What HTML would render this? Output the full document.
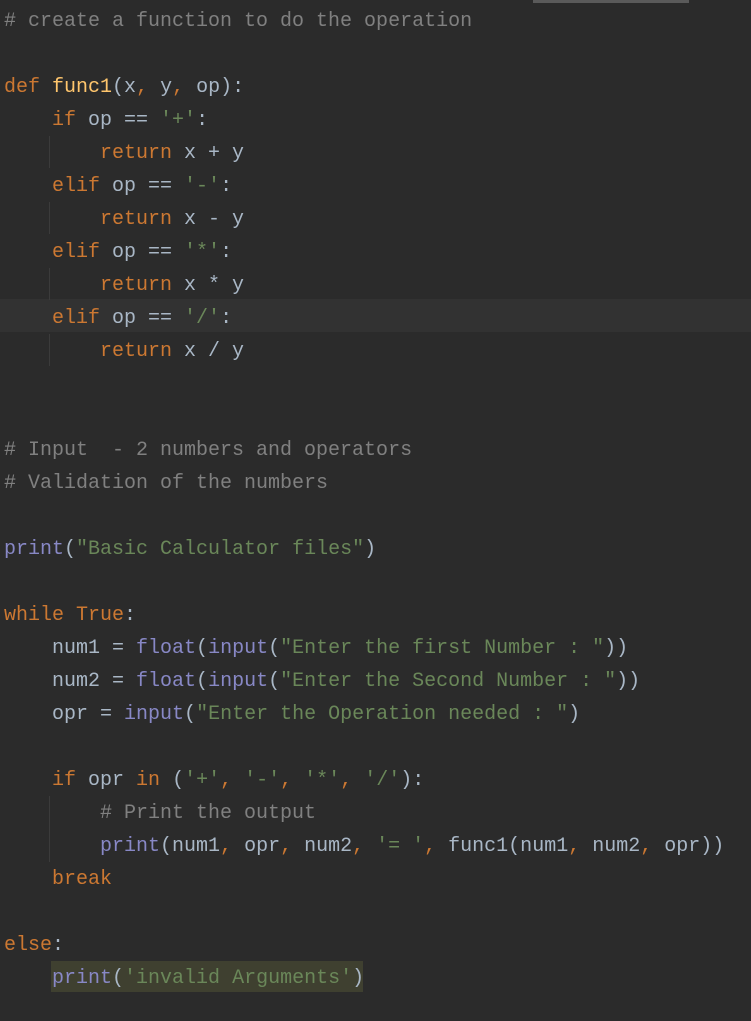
<!DOCTYPE html>
<html><head><style>
html,body{margin:0;padding:0;background:#2b2b2b;width:751px;height:1021px;overflow:hidden}
#c{position:absolute;left:4px;top:5px;font:20px/33px "Liberation Mono",monospace;color:#a9b7c6;white-space:pre}
.k{color:#cc7832}.s{color:#6a8759}.c{color:#808080}.f{color:#ffc66d}.b{color:#8888c6}
.g{position:absolute;width:1px;background:#3b3b3b;left:49px}
</style></head><body>
<div style="position:absolute;left:533px;top:0;width:156px;height:3px;background:#5a5a5a"></div>
<div style="position:absolute;left:0;top:299px;width:751px;height:33px;background:#323232"></div>
<div style="position:absolute;left:51px;top:961px;width:312px;height:31px;background:#3f4030"></div>
<div class="g" style="top:136px;height:32px"></div>
<div class="g" style="top:202px;height:32px"></div>
<div class="g" style="top:268px;height:32px"></div>
<div class="g" style="top:334px;height:32px"></div>
<div class="g" style="top:796px;height:66px"></div>
<div id="c"><span class="c"># create a function to do the operation</span>

<span class="k">def</span> <span class="f">func1</span>(x<span class="k">,</span> y<span class="k">,</span> op):
    <span class="k">if</span> op == <span class="s">'+'</span>:
        <span class="k">return</span> x + y
    <span class="k">elif</span> op == <span class="s">'-'</span>:
        <span class="k">return</span> x - y
    <span class="k">elif</span> op == <span class="s">'*'</span>:
        <span class="k">return</span> x * y
    <span class="k">elif</span> op == <span class="s">'/'</span>:
        <span class="k">return</span> x / y


<span class="c"># Input  - 2 numbers and operators</span>
<span class="c"># Validation of the numbers</span>

<span class="b">print</span>(<span class="s">"Basic Calculator files"</span>)

<span class="k">while</span> <span class="k">True</span>:
    num1 = <span class="b">float</span>(<span class="b">input</span>(<span class="s">"Enter the first Number : "</span>))
    num2 = <span class="b">float</span>(<span class="b">input</span>(<span class="s">"Enter the Second Number : "</span>))
    opr = <span class="b">input</span>(<span class="s">"Enter the Operation needed : "</span>)

    <span class="k">if</span> opr <span class="k">in</span> (<span class="s">'+'</span><span class="k">,</span> <span class="s">'-'</span><span class="k">,</span> <span class="s">'*'</span><span class="k">,</span> <span class="s">'/'</span>):
        <span class="c"># Print the output</span>
        <span class="b">print</span>(num1<span class="k">,</span> opr<span class="k">,</span> num2<span class="k">,</span> <span class="s">'= '</span><span class="k">,</span> func1(num1<span class="k">,</span> num2<span class="k">,</span> opr))
    <span class="k">break</span>

<span class="k">else</span>:
    <span class="b">print</span>(<span class="s">'invalid Arguments'</span>)</div>
</body></html>
